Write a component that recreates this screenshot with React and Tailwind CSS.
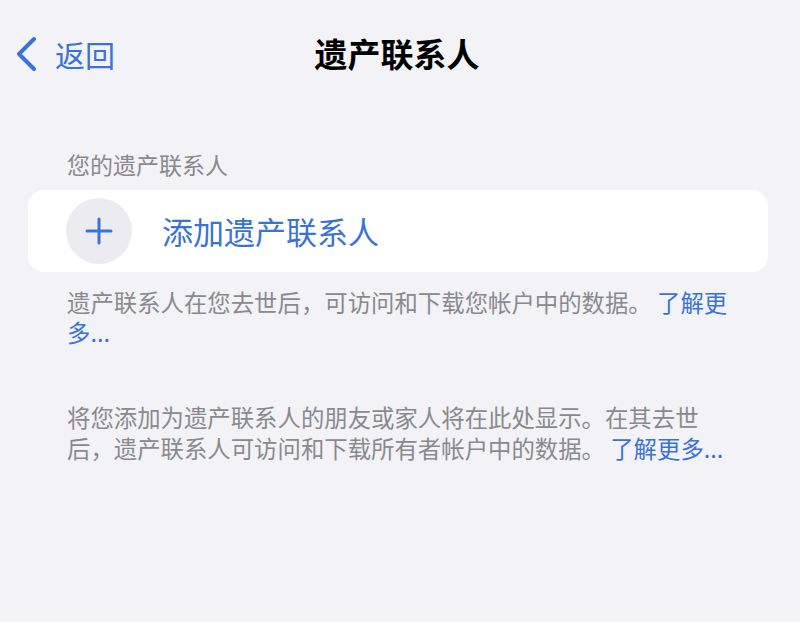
export default function App() {
  const font = {
    fontFamily: '"Noto Sans CJK SC", "Noto Sans", sans-serif',
  };

  return (
    <div
      className="w-[800px] h-[622px] bg-[#f2f2f7] overflow-hidden"
      style={font}
    >
      {/* nav bar */}
      <div className="relative h-[108px] flex items-start pt-[34px]">
        <div className="flex items-center pl-[13px] text-[#3a72d8]">
          <svg width="26" height="36" viewBox="0 0 26 36" fill="none">
            <path
              d="M21 3 L6 18 L21 33"
              stroke="#3a72d8"
              strokeWidth="4"
              strokeLinecap="round"
              strokeLinejoin="round"
            />
          </svg>
          <span className="ml-[16px] text-[30px] leading-[40px]">返回</span>
        </div>
        <div className="absolute left-0 right-0 top-[33px] text-center text-[33px] leading-[40px] font-bold text-black pr-[6px]">
          遗产联系人
        </div>
      </div>

      <div className="pl-[28px] pr-[32px]">
        <div className="pl-[39px] text-[23px] leading-[32px] text-[#8a8a8e] mt-[40px]">
          您的遗产联系人
        </div>

        <div className="mt-[10px] h-[82px] bg-white rounded-[16px] flex items-center pl-[38px]">
          <div className="w-[66px] h-[66px] rounded-full bg-[#ececf0] flex items-center justify-center">
            <svg width="28" height="28" viewBox="0 0 28 28">
              <path
                d="M14 2 V26 M2 14 H26"
                stroke="#3a72d8"
                strokeWidth="3"
                strokeLinecap="round"
              />
            </svg>
          </div>
          <span className="ml-[30px] text-[31px] leading-[40px] text-[#3a72d8]">
            添加遗产联系人
          </span>
        </div>

        <p className="pl-[39px] mt-[15px] text-[23.4px] leading-[30px] text-[#8a8a8e] whitespace-nowrap">
          遗产联系人在您去世后，可访问和下载您帐户中的数据。{" "}
          <span className="text-[#3a72d8]">了解更</span>
          <br />
          <span className="text-[#3a72d8]">多...</span>
        </p>

        <p className="pl-[39px] mt-[55px] text-[23.4px] leading-[31px] text-[#8a8a8e] whitespace-nowrap">
          将您添加为遗产联系人的朋友或家人将在此处显示。在其去世
          <br />
          后，遗产联系人可访问和下载所有者帐户中的数据。{" "}
          <span className="text-[#3a72d8]">了解更多...</span>
        </p>
      </div>
    </div>
  );
}
